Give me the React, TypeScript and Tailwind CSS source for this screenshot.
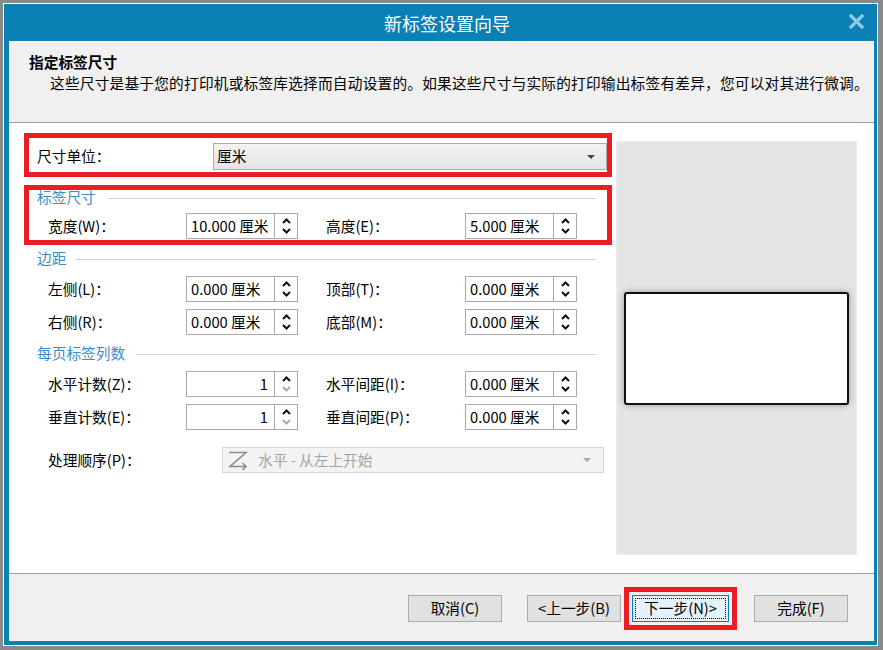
import React from 'react';

interface SpinBoxProps {
    value: string;
    alignRight?: boolean;
    downDisabled?: boolean;
}

const SpinArrow = ({ up, disabled }: { up?: boolean; disabled?: boolean }) => (
    <svg width="9" height="6" viewBox="0 0 9 6" className={disabled ? 'text-[#a9a9a9]' : 'text-[#111111]'}>
        <path d={up ? 'M1 5L4.5 1.5L8 5' : 'M1 1L4.5 4.5L8 1'} stroke="currentColor" strokeWidth="2" fill="none" />
    </svg>
);

const SpinBox = ({ value, alignRight, downDisabled }: SpinBoxProps) => (
    <div className="flex h-[26px] w-[112px] border border-[#a9a9a9] bg-white">
        <div
            className={
                alignRight
                    ? 'flex w-[88px] items-center justify-end border-r border-[#a9a9a9] pr-[6px]'
                    : 'flex w-[88px] items-center border-r border-[#a9a9a9] pl-[4px]'
            }
        >
            {value}
        </div>
        <div className="flex flex-1 flex-col items-center justify-center gap-[4px]">
            <SpinArrow up />
            <SpinArrow disabled={downDisabled} />
        </div>
    </div>
);

const SectionHeader = ({ title }: { title: string }) => (
    <div className="flex h-[14px] items-center pl-[8px] pr-[10px]">
        <span className="leading-[14px] text-[#3d8cc6]">{title}</span>
        <div className="ml-[11px] mt-[3px] h-px flex-1 bg-[#d6d6d6]" />
    </div>
);

interface FieldRowProps {
    l1: string;
    v1: string;
    l2: string;
    v2: string;
    count?: boolean;
}

const FieldRow = ({ l1, v1, l2, v2, count }: FieldRowProps) => (
    <div className="flex h-[26px] items-center pl-[19px]">
        <span className="w-[138px]">{l1}</span>
        <SpinBox value={v1} alignRight={count} downDisabled={count} />
        <span className="ml-[28px] w-[139px]">{l2}</span>
        <SpinBox value={v2} />
    </div>
);

const Button = ({ children }: { children: React.ReactNode }) => (
    <button className="flex h-[27px] w-[94px] items-center justify-center border border-[#adadad] bg-[#e1e1e1] leading-none text-black">
        {children}
    </button>
);

export default function App() {
    return (
        <div className="h-[650px] w-[883px] overflow-hidden bg-[#8a8a8a] pl-[3px] pt-[3px] font-['Noto_Sans_CJK_SC',sans-serif] text-[14.7px] text-black">
            <div className="flex h-[643px] w-[875px] flex-col border border-white bg-[#0a80b4] pb-[4px] pl-[5px] pr-[3px]">
                {/* Title bar */}
                <div className="relative flex h-[37px] shrink-0 items-center justify-center pl-[11px] text-[18px] leading-none text-white">
                    新标签设置向导
                    <svg className="absolute right-[10px] top-[10px]" width="15" height="15" viewBox="0 0 15 15">
                        <path d="M2 2L13 13M13 2L2 13" stroke="#8fcbe4" strokeWidth="3.2" strokeLinecap="square" />
                    </svg>
                </div>

                {/* Header */}
                <div className="h-[82px] shrink-0 border-b border-[#a0a0a0] bg-[#f0f0f0] pl-[20px] pt-[11px] leading-[20px]">
                    <div className="font-bold">指定标签尺寸</div>
                    <div className="ml-[21px] mt-[1px] tracking-[0.2px]">
                        这些尺寸是基于您的打印机或标签库选择而自动设置的。如果这些尺寸与实际的打印输出标签有差异，您可以对其进行微调。
                    </div>
                </div>

                {/* Main */}
                <div className="flex h-[450px] shrink-0 bg-white pl-[15px]">
                    <div className="w-[588px] pt-[10px]">
                        {/* Unit */}
                        <div className="flex h-[44px] items-start border-[5px] border-[#ec1c24]">
                            <div className="mt-[5px] flex h-[27px] w-[184px] items-center pl-[8px]">尺寸单位：</div>
                            <div className="mt-[5px] flex h-[27px] flex-1 items-center justify-between border border-[#acacac] bg-linear-to-b from-[#f3f3f3] to-[#e4e4e4] pl-[3px] pr-[11px]">
                                <span>厘米</span>
                                <svg width="8" height="4" viewBox="0 0 8 4">
                                    <path d="M0 0H8L4 4Z" fill="#444444" />
                                </svg>
                            </div>
                        </div>

                        {/* Label size */}
                        <div className="mt-[8px] h-[60px] border-[5px] border-[#ec1c24]">
                            <SectionHeader title="标签尺寸" />
                            <div className="mt-[9px]">
                                <FieldRow l1="宽度(W)：" v1="10.000 厘米" l2="高度(E)：" v2="5.000 厘米" />
                            </div>
                        </div>

                        {/* Margins */}
                        <div className="px-[5px]">
                            <div className="mt-[6px]">
                                <SectionHeader title="边距" />
                            </div>
                            <div className="mt-[11px] flex flex-col gap-[7px]">
                                <FieldRow l1="左侧(L)：" v1="0.000 厘米" l2="顶部(T)：" v2="0.000 厘米" />
                                <FieldRow l1="右侧(R)：" v1="0.000 厘米" l2="底部(M)：" v2="0.000 厘米" />
                            </div>

                            {/* Labels per page */}
                            <div className="mt-[11px]">
                                <SectionHeader title="每页标签列数" />
                            </div>
                            <div className="mt-[11px] flex flex-col gap-[7px]">
                                <FieldRow l1="水平计数(Z)：" v1="1" l2="水平间距(I)：" v2="0.000 厘米" count />
                                <FieldRow l1="垂直计数(E)：" v1="1" l2="垂直间距(P)：" v2="0.000 厘米" count />
                            </div>

                            <div className="mt-[17px] flex h-[26px] items-center pl-[19px]">
                                <span className="w-[174px]">处理顺序(P)：</span>
                                <div className="flex h-[26px] w-[382px] items-center border border-[#d9d9d9] bg-[#f3f3f3] pl-[4px] pr-[12px] text-[#a3a3a3]">
                                    <svg width="22" height="20" viewBox="0 0 22 20">
                                        <path
                                            d="M2 2.5H19L3 16.5H19M15.5 13L19 16.5L15.5 20"
                                            stroke="#8c8c8c"
                                            strokeWidth="1.6"
                                            fill="none"
                                        />
                                    </svg>
                                    <span className="ml-[9px] flex-1">水平 - 从左上开始</span>
                                    <svg width="8" height="4" viewBox="0 0 8 4">
                                        <path d="M0 0H8L4 4Z" fill="#a8a8a8" />
                                    </svg>
                                </div>
                            </div>
                        </div>
                    </div>

                    {/* Preview */}
                    <div className="ml-[4px] mt-[18px] flex h-[414px] w-[241px] items-center justify-center border border-[#eeeeee] bg-[#e5e5e5]">
                        <div className="h-[113px] w-[225px] rounded-[3px] border-2 border-[#111111] bg-white shadow-[0_0_7px_rgba(0,0,0,0.35)]" />
                    </div>
                </div>

                {/* Footer */}
                <div className="flex h-[68px] shrink-0 items-center border-t border-[#a0a0a0] bg-[#f0f0f0] pl-[399px] pt-[2px]">
                    <Button>取消(C)</Button>
                    <div className="ml-[25px]">
                        <Button>&lt;上一步(B)</Button>
                    </div>
                    <div className="ml-[3px] border-[5px] border-[#ec1c24] p-[3px]">
                        <button className="flex h-[27px] w-[97px] border border-[#0078d7] bg-[#e5f1fb] p-[2px] leading-none text-black">
                            <span className="flex h-full w-full items-center justify-center border border-dotted border-black">
                                下一步(N)&gt;
                            </span>
                        </button>
                    </div>
                    <div className="ml-[17px]">
                        <Button>完成(F)</Button>
                    </div>
                </div>
            </div>
        </div>
    );
}
